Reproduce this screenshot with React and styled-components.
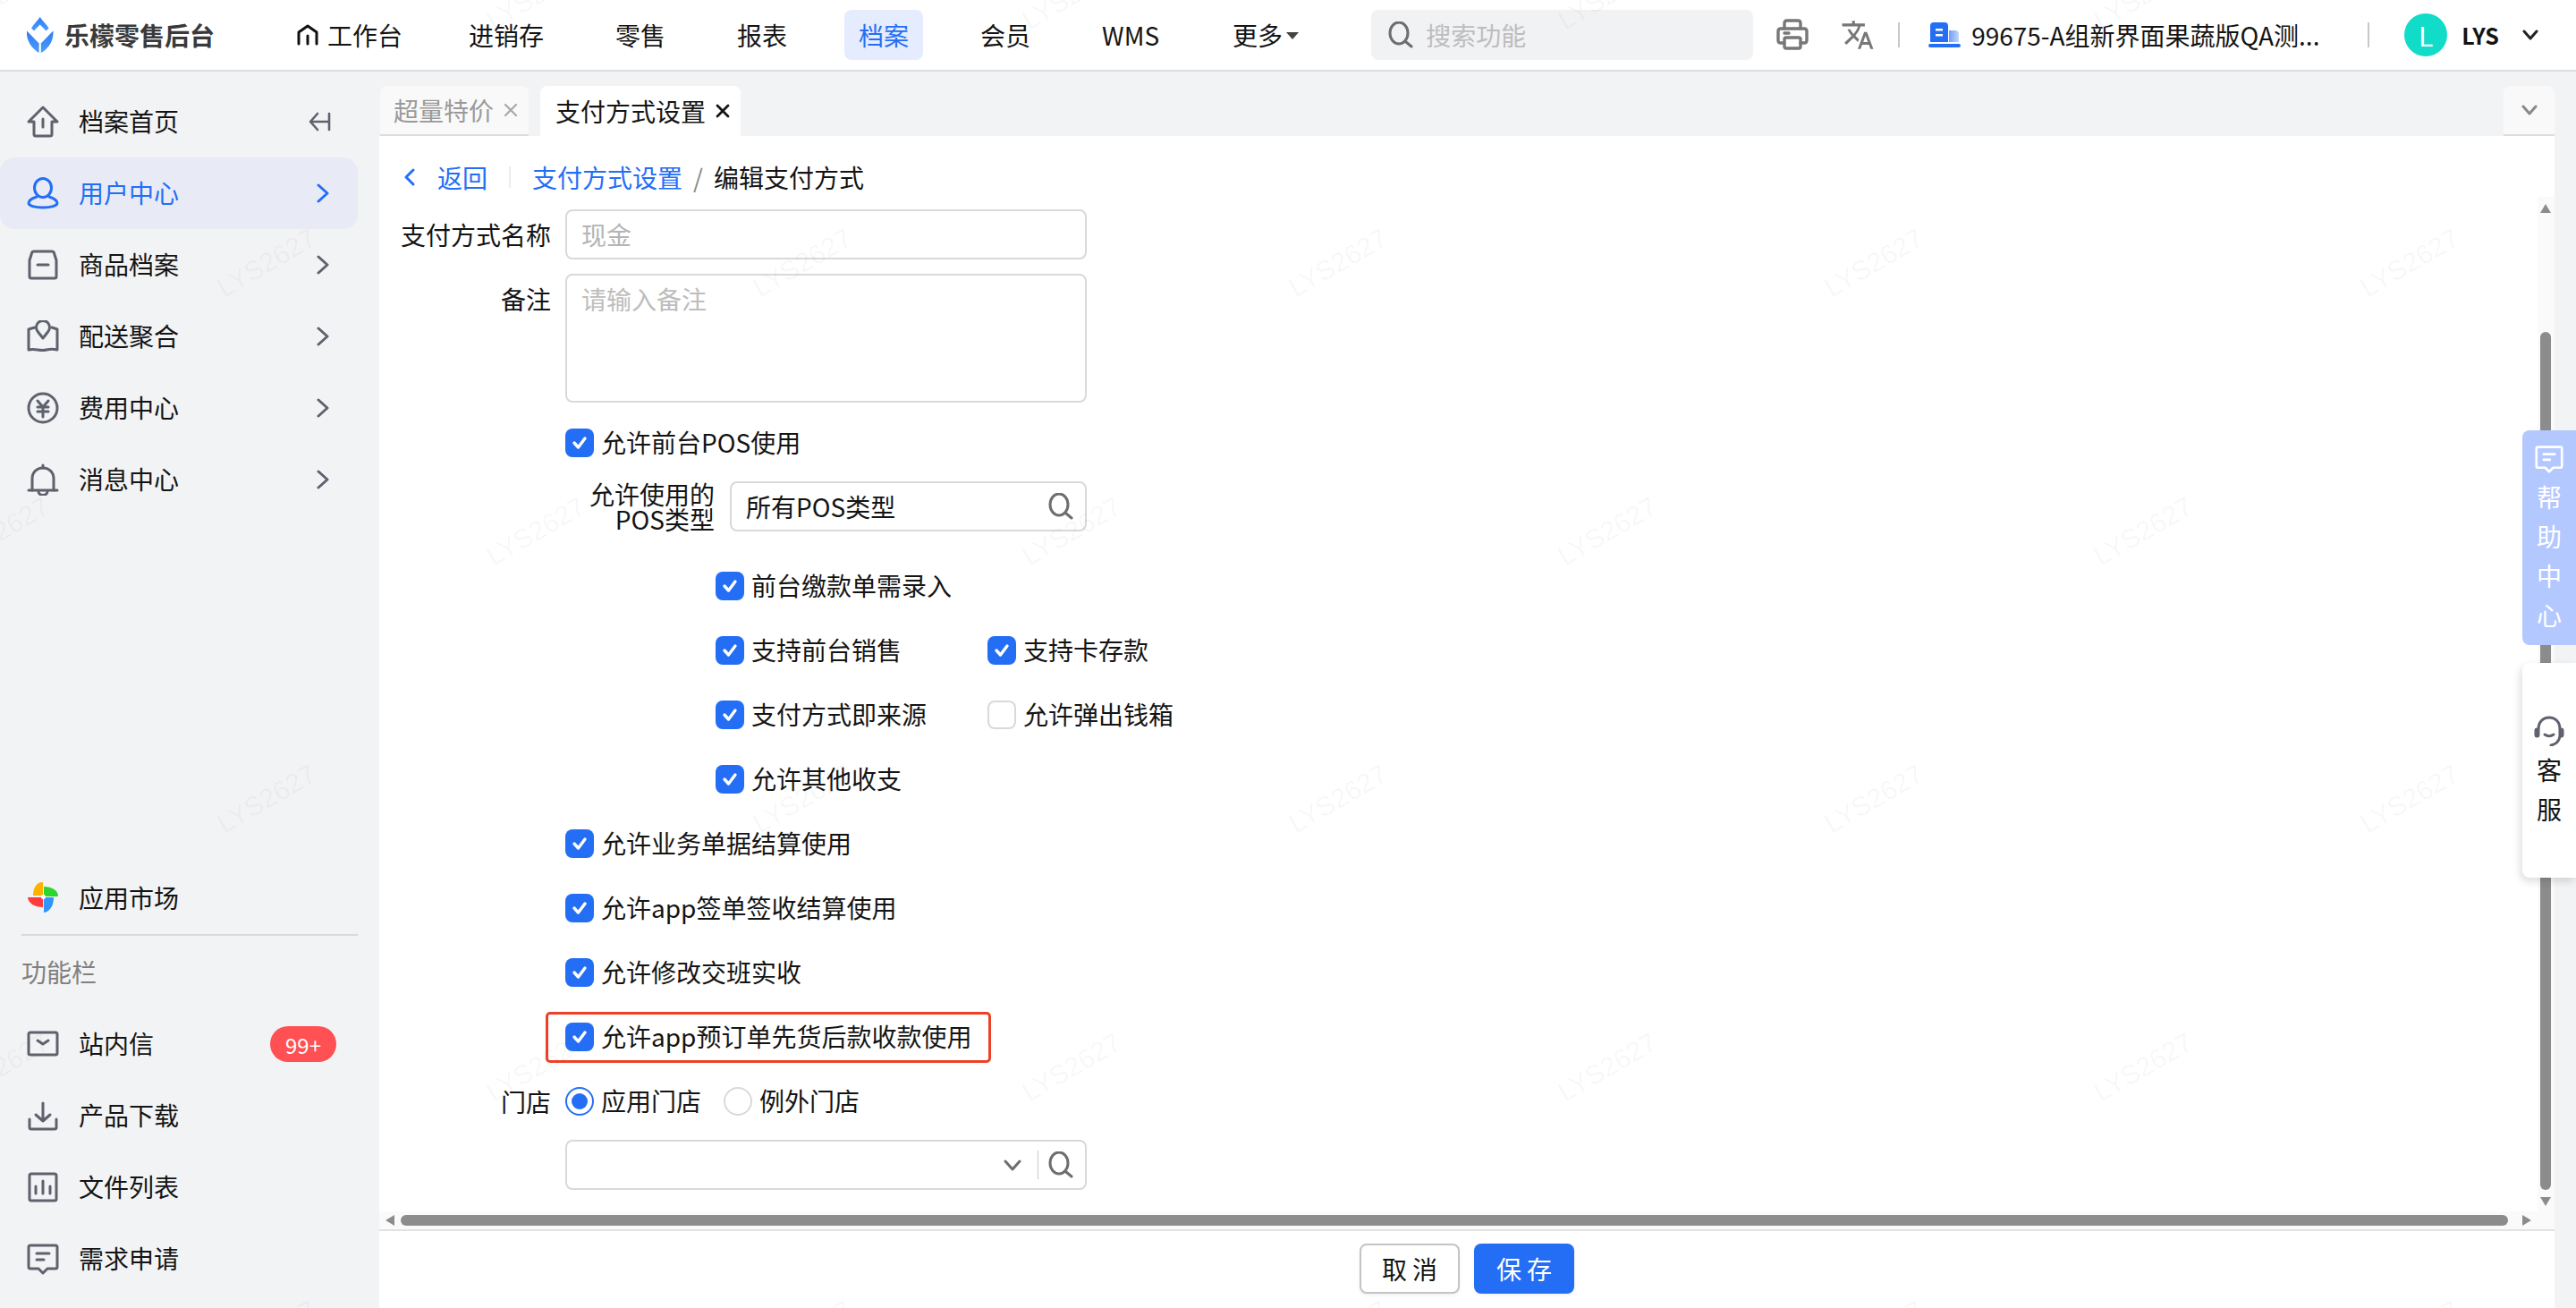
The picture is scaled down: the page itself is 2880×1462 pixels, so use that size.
import React from 'react'
import styled, { createGlobalStyle } from 'styled-components'
import { MdTranslate } from 'react-icons/md'

const blue = '#246ef5'
const iconGrey = '#5f616d'

const Global = createGlobalStyle`
  html, body {
    margin: 0;
    padding: 0;
    background: #f2f3f5;
  }
  body {
    font-family: "Noto Sans CJK SC", "Noto Sans", sans-serif;
    font-size: 28px;
    color: #141414;
  }
  * { box-sizing: border-box; }
`

const Page = styled.div`
  position: relative;
  width: 2880px;
  height: 1462px;
  display: flex;
  flex-direction: column;
  overflow: hidden;
`

// the glyphs sit about 2px higher in the reference than the box centre
const Raised = styled.span`
  margin-bottom: 2px;
  white-space: nowrap;
`

/* header */
const Header = styled.header`
  height: 80px;
  flex: none;
  display: flex;
  align-items: center;
  padding-left: 30px;
  background: #fff;
  border-bottom: 2px solid #dcdcdc;
`
const Brand = styled.div`
  display: flex;
  align-items: center;
  gap: 12px;
  width: 285px;
  font-weight: 700;
  color: #3a3a3a;
  line-height: 40px;
`
const Nav = styled.nav`
  display: flex;
  align-items: center;
  gap: 48px;
`
const NavItem = styled.div`
  height: 56px;
  padding: 0 16px;
  margin-left: ${p => p.$shift || 0}px;
  display: flex;
  align-items: center;
  border-radius: 8px;
  background: ${p => (p.$active ? '#e4ecfd' : 'transparent')};
  color: ${p => (p.$active ? blue : '#141414')};
`
const HomeNavItem = styled(NavItem)`
  gap: 9px;
  margin-right: -6px;
`
const Caret = styled.i`
  width: 0;
  height: 0;
  margin-left: 4px;
  margin-top: 2px;
  border-left: 7px solid transparent;
  border-right: 7px solid transparent;
  border-top: 8px solid #444;
`
const SearchBox = styled.div`
  width: 427px;
  height: 56px;
  margin-left: 65px;
  padding-left: 18px;
  display: flex;
  align-items: center;
  gap: 13px;
  border-radius: 8px;
  background: #f1f2f4;
  color: #bdbdbd;
`
const HeaderTools = styled.div`
  display: flex;
  align-items: center;
  margin-left: 26px;
`
const ToolIcon = styled.span`
  display: flex;
  color: #777;
  margin-left: ${p => p.$before || 0}px;
  margin-right: ${p => p.$after || 0}px;
`
const VLine = styled.i`
  width: 2px;
  height: 28px;
  background: #c8c8c8;
`
const StoreName = styled.div`
  width: 392px;
  margin-left: 12px;
  white-space: nowrap;
`
const Avatar = styled.div`
  width: 48px;
  height: 48px;
  margin-left: 39px;
  border-radius: 50%;
  background: #10dcc8;
  color: #fff;
  display: flex;
  align-items: center;
  justify-content: center;
  font-size: 30px;
`
const UserName = styled.div`
  margin-left: 16px;
  font-weight: 600;
  font-size: 25px;
`

/* body */
const Body = styled.div`
  flex: 1;
  min-height: 0;
  display: flex;
  background: #f2f3f5;
`
const Sidebar = styled.aside`
  width: 424px;
  flex: none;
  padding-top: 16px;
  padding-bottom: 15px;
  display: flex;
  flex-direction: column;
`
const Menu = styled.div`
  display: flex;
  flex-direction: column;
  margin-top: ${p => (p.$bottom ? 'auto' : '0')};
`
const MenuItem = styled.div`
  width: 400px;
  height: 80px;
  flex: none;
  padding: 0 32px 0 30px;
  display: flex;
  align-items: center;
  gap: 22px;
  border-radius: 16px;
  background: ${p => (p.$active ? '#e8ebf5' : 'transparent')};
  color: ${p => (p.$active ? blue : '#141414')};
`
const MenuEnd = styled.span`
  margin-left: auto;
  margin-right: ${p => p.$shift || 0}px;
  display: flex;
`
const MenuLine = styled.div`
  width: 376px;
  height: 2px;
  margin-left: 24px;
  background: #d8d9dc;
`
const MenuTitle = styled.div`
  height: 81px;
  padding: 0 0 2px 24px;
  display: flex;
  align-items: center;
  color: #808080;
`
const Badge = styled.span`
  width: 74px;
  height: 40px;
  margin-left: auto;
  margin-right: -8px;
  border-radius: 20px;
  background: #ff5053;
  color: #fff;
  font-size: 24px;
  display: flex;
  align-items: center;
  justify-content: center;
`

/* main */
const Main = styled.main`
  flex: 1;
  min-width: 0;
  padding-top: 16px;
  padding-right: 24px;
  display: flex;
  flex-direction: column;
`
const Tabs = styled.div`
  height: 56px;
  flex: none;
  display: flex;
  gap: 13px;
  padding-left: 1px;
`
const Tab = styled.div`
  width: ${p => (p.$active ? 224 : 166)}px;
  padding-left: ${p => (p.$active ? 17 : 15)}px;
  display: flex;
  align-items: center;
  gap: 10px;
  border-radius: 8px 8px 0 0;
  background: ${p => (p.$active ? '#fff' : '#f9f9f9')};
  border-bottom: ${p => (p.$active ? 'none' : '2px solid #dcdcdc')};
  color: ${p => (p.$active ? '#141414' : '#9a9a9a')};
`
const TabMore = styled.div`
  width: 57px;
  margin-left: auto;
  display: flex;
  align-items: center;
  justify-content: center;
  border-radius: 8px 8px 0 0;
  background: #f9f9f9;
  border-bottom: 2px solid #dcdcdc;
`
const Panel = styled.section`
  flex: 1;
  min-height: 0;
  background: #fff;
  display: flex;
  flex-direction: column;
`
const ContentRow = styled.div`
  flex: 1;
  min-height: 0;
  display: flex;
`
const FormArea = styled.div`
  flex: 1;
  min-width: 0;
  padding-top: 10px;
`
const Crumbs = styled.div`
  height: 72px;
  padding-left: 28px;
  display: flex;
  align-items: center;
  color: ${blue};
`
const BackLink = styled.span`
  display: flex;
  align-items: center;
  gap: 25px;
`
const CrumbLine = styled.i`
  width: 2px;
  height: 24px;
  margin: 0 24px;
  background: #ececec;
`
const CrumbSep = styled.span`
  margin: 0 12px;
  color: #8a8a8a;
`
const CrumbNow = styled.span`
  color: #141414;
`
const FieldRow = styled.div`
  display: flex;
  align-items: ${p => (p.$top ? 'flex-start' : 'center')};
  margin-bottom: ${p => p.$after || 0}px;
`
const FieldLabel = styled.label`
  width: 192px;
  margin-right: 16px;
  flex: none;
  text-align: right;
  line-height: ${p => (p.$top ? '56px' : '36px')};
`
const TextInput = styled.input`
  width: 583px;
  height: 56px;
  padding: 0 16px;
  border: 2px solid #d9d9d9;
  border-radius: 8px;
  background: #fff;
  font: inherit;
  outline: none;
  &::placeholder { color: #b4b4b4; opacity: 1; }
`
const TextArea = styled.textarea`
  width: 583px;
  height: 144px;
  padding: 6px 16px;
  border: 2px solid #d9d9d9;
  border-radius: 8px;
  background: #fff;
  font: inherit;
  line-height: 40px;
  outline: none;
  resize: none;
  &::placeholder { color: #bdbdbd; opacity: 1; }
`
const Indented = styled.div`
  margin-left: ${p => p.$left}px;
  margin-top: ${p => p.$top || 0}px;
  display: ${p => (p.$flex ? 'flex' : 'block')};
  align-items: center;
`
const CheckRow = styled.div`
  height: 72px;
  display: grid;
  grid-template-columns: 304px auto;
  justify-content: start;
  align-items: center;
`
const CheckItem = styled.div`
  display: flex;
  align-items: center;
  gap: 8px;
`
const Box = styled.span`
  width: 32px;
  height: 32px;
  flex: none;
  display: flex;
  align-items: center;
  justify-content: center;
  border-radius: 8px;
  background: ${p => (p.$on ? blue : '#fff')};
  border: ${p => (p.$on ? 'none' : '2px solid #d9d9d9')};
`
const HighlightBox = styled.div`
  width: 498px;
  height: 57px;
  margin-left: -22px;
  padding-left: 19px;
  display: flex;
  align-items: center;
  border: 3px solid #ee4027;
  border-radius: 5px;
`
const RowPlain = styled.div`
  height: 72px;
  display: flex;
  align-items: center;
`
const SubLabel = styled.div`
  width: 167px;
  margin-right: 17px;
  flex: none;
  text-align: right;
  line-height: 28px;
`
const PickerBox = styled.div`
  width: ${p => p.$w}px;
  height: 56px;
  padding-left: 16px;
  padding-right: 12px;
  display: flex;
  align-items: center;
  justify-content: space-between;
  border: 2px solid #d9d9d9;
  border-radius: 8px;
  background: #fff;
`
const PickerTools = styled.div`
  display: flex;
  align-items: center;
  gap: 10px;
`
const PickerArrow = styled.span`
  display: flex;
  margin-right: 8px;
`
const PickerLine = styled.i`
  width: 1px;
  height: 32px;
  background: #c8c8c8;
`
const RadioGroup = styled.div`
  display: flex;
  align-items: center;
`
const RadioItem = styled.div`
  display: flex;
  align-items: center;
  gap: 8px;
  margin-right: 25px;
`
const RadioDot = styled.span`
  width: 32px;
  height: 32px;
  flex: none;
  border-radius: 50%;
  display: flex;
  align-items: center;
  justify-content: center;
  border: 2px solid ${p => (p.$on ? blue : '#d9d9d9')};
  &::after {
    content: '';
    width: 18px;
    height: 18px;
    border-radius: 50%;
    background: ${p => (p.$on ? blue : 'transparent')};
  }
`

/* scroll bars */
const VBar = styled.div`
  width: 19px;
  flex: none;
  margin-top: 68px;
  padding: 8px 4px 6px 3px;
  background: #fafafa;
  display: flex;
  flex-direction: column;
  align-items: center;
`
const VThumb = styled.div`
  width: 12px;
  height: 959px;
  margin-top: 133px;
  margin-bottom: auto;
  border-radius: 6px;
  background: #8c8c8c;
`
const ArrowV = styled.i`
  width: 0;
  height: 0;
  border-left: 6px solid transparent;
  border-right: 6px solid transparent;
  ${p => (p.$down ? 'border-top: 10px solid #8c8c8c;' : 'border-bottom: 10px solid #8c8c8c;')}
`
const HBar = styled.div`
  height: 22px;
  flex: none;
  padding-left: 7px;
  display: flex;
  align-items: center;
  background: #fafafa;
  border-bottom: 2px solid #e2e2e2;
`
const HThumb = styled.div`
  width: 2356px;
  height: 12px;
  margin: 0 16px 0 7px;
  border-radius: 6px;
  background: #8c8c8c;
`
const ArrowH = styled.i`
  width: 0;
  height: 0;
  border-top: 6px solid transparent;
  border-bottom: 6px solid transparent;
  ${p => (p.$right ? 'border-left: 10px solid #8c8c8c;' : 'border-right: 10px solid #8c8c8c;')}
`

/* footer */
const Footer = styled.footer`
  height: 86px;
  flex: none;
  padding-top: 14px;
  display: flex;
  justify-content: center;
  gap: 16px;
`
const Button = styled.button`
  width: 112px;
  height: 56px;
  border-radius: 8px;
  font: inherit;
  letter-spacing: 6px;
  padding: 0 0 0 6px;
  border: ${p => (p.$primary ? 'none' : '2px solid #c4c4c4')};
  background: ${p => (p.$primary ? blue : '#fff')};
  color: ${p => (p.$primary ? '#fff' : '#141414')};
  box-shadow: 0 2px 4px rgba(0, 0, 0, 0.06);
`

/* floating side tabs */
const SideDock = styled.div`
  position: absolute;
  right: 0;
  top: 481px;
  display: flex;
  flex-direction: column;
  gap: 20px;
`
const SideTab = styled.div`
  width: 60px;
  height: 240px;
  padding-top: 4px;
  display: flex;
  flex-direction: column;
  align-items: center;
  justify-content: center;
  line-height: 44px;
  border-radius: 8px 0 0 8px;
  background: ${p => (p.$help ? '#b3c8ff' : '#fff')};
  color: ${p => (p.$help ? '#fff' : '#141414')};
  box-shadow: ${p => (p.$help ? 'none' : '-2px 4px 10px rgba(0, 0, 0, 0.14)')};
`
const SideIcon = styled.span`
  display: flex;
  margin-bottom: 4px;
`

/* watermark */
const WatermarkLayer = styled.div`
  position: absolute;
  inset: 0;
  overflow: hidden;
  pointer-events: none;
`
const Mark = styled.span`
  position: absolute;
  width: 170px;
  margin-left: -85px;
  margin-top: -20px;
  text-align: center;
  font-family: "Liberation Sans", sans-serif;
  font-size: 30px;
  line-height: 40px;
  color: rgba(0, 0, 0, 0.04);
  transform: rotate(-30deg);
`

/* icons */
const Svg = styled.svg`
  flex: none;
  display: block;
  fill: none;
  stroke: ${p => p.$c || iconGrey};
  stroke-width: ${p => p.$sw || 3};
  stroke-linecap: round;
  stroke-linejoin: round;
`
const Line = ({ w = 36, h = 36, c, sw, children }) => (
  <Svg width={w} height={h} viewBox={`0 0 ${w} ${h}`} $c={c} $sw={sw}>{children}</Svg>
)

const Logo = () => (
  <svg width="30" height="40" viewBox="0 0 30 40">
    <defs>
      <linearGradient id="lg" x1="0" y1="0" x2="0" y2="1">
        <stop offset="0" stopColor="#2b7cf5" />
        <stop offset="1" stopColor="#4f9cfb" />
      </linearGradient>
    </defs>
    <path fill="url(#lg)" d="M14.7 0 C17 4 22 8 24.6 12.4 L21.5 15.6 L14.7 8.6 L8 15.6 L5 12.4 C7.5 8 12.4 4 14.7 0Z" />
    <path fill="url(#lg)" d="M0 15.5 L13.6 29.4 V40 C6 36 -1 27 0 15.5Z" />
    <path fill="url(#lg)" d="M29.4 15.5 L15.8 29.4 V40 C23.4 36 30.4 27 29.4 15.5Z" />
  </svg>
)
const WorkIcon = () => (
  <Line w={26} h={24} c="#111"><path d="M3 22 V9 L13 2 L23 9 V22" /><path d="M13 13 V22" /></Line>
)
const HomeIcon = () => (
  <Line><path d="M2 18 L18 2 L34 18 H28 V32 Q28 34 26 34 H10 Q8 34 8 32 V18 Z" /><path d="M18 15 V24" /></Line>
)
const UserIcon = () => (
  <Line c={blue}>
    <ellipse cx="18" cy="12" rx="9.5" ry="10.5" />
    <path d="M11 22 C5 24 2 26 2 29 C2 32 9 34 18 34 C27 34 34 32 34 29 C34 26 31 24 25 22" />
  </Line>
)
const BoxIcon = () => (
  <Line>
    <path d="M8 3 H28 Q30 3 30.5 5 L33 13 V31 Q33 33 31 33 H5 Q3 33 3 31 V13 L5.5 5 Q6 3 8 3 Z" /><path d="M12 18 H24" />
  </Line>
)
const MapIcon = () => (
  <Line>
    <path d="M9 8 L2 10 V33 C10 31 14 35 22 33 C26 32 30 32 34 33 V10 L28 8" />
    <path d="M18 20 L12.5 13 A7.5 7.5 0 1 1 23.5 13 Z" />
  </Line>
)
const YenIcon = () => (
  <Line>
    <circle cx="18" cy="18" r="16" />
    <path d="M12 10 L18 17 L24 10 M12 17 H24 M12 22 H24 M18 17 V28" />
  </Line>
)
const BellIcon = () => (
  <Line>
    <path d="M6 30 V17 C6 10 11 5 18 5 C25 5 30 10 30 17 V30" /><path d="M2 30 H34" /><path d="M18 2 V5" />
    <path d="M13 31 C13 37 23 37 23 31" />
  </Line>
)
const MailIcon = () => (
  <Line>
    <rect x="2" y="5" width="32" height="25" rx="2" /><path d="M12 14 L18 18 L24 14" />
  </Line>
)
const DownloadIcon = () => (
  <Line>
    <path d="M3 22 V31 Q3 33 5 33 H31 Q33 33 33 31 V22" /><path d="M18 4 V24 M10 17 L18 24 L26 17" />
  </Line>
)
const ChartIcon = () => (
  <Line>
    <rect x="3" y="3" width="30" height="30" rx="2" /><path d="M10 17 V25 M18 11 V25 M26 17 V25" />
  </Line>
)
const BubbleIcon = ({ c, w = 36 }) => (
  <Svg width={w} height={w} viewBox="0 0 36 36" $c={c}>
    <path d="M4 3 H32 Q34 3 34 5 V27 Q34 29 32 29 H23 L18 34 L13 29 H4 Q2 29 2 27 V5 Q2 3 4 3 Z" />
    <path d="M11 12 H25 M11 19 H19" />
  </Svg>
)
const Pinwheel = () => (
  <svg width="36" height="36" viewBox="-1 0 36 36">
    <path fill="#ffb000" d="M17 15 V0 C10 0 6 6 6 15 Z" />
    <path fill="#2fd52f" d="M18 16 H34 C34 9 27 5 18 5 Z" />
    <path fill="#ff3b3b" d="M17 17 H0 C1 24 8 28 17 28 Z" />
    <path fill="#2f95ff" d="M18 17 V34 C25 33 29 26 29 17 Z" />
    <circle cx="17.5" cy="16.5" r="2.5" fill="#fff" />
  </svg>
)
const Collapse = () => (
  <Line w={26} h={24} sw={2.6}><path d="M11 3 L3 12 L11 21 M3 12 H24 M24 3 V21" /></Line>
)
const Chevron = ({ c = iconGrey, dir = 'right', w = 14, h = 22 }) => (
  <Line w={w} h={h} c={c}>
    {dir === 'right'
      ? <path d={`M2 2 L${w - 2} ${h / 2} L2 ${h - 2}`} />
      : dir === 'left'
        ? <path d={`M${w - 2} 2 L2 ${h / 2} L${w - 2} ${h - 2}`} />
        : <path d={`M2 2 L${w / 2} ${h - 2} L${w - 2} 2`} />}
  </Line>
)
const CloseMark = ({ c, sw }) => (
  <Line w={18} h={18} c={c} sw={sw}><path d="M3 3 L15 15 M15 3 L3 15" /></Line>
)
const SearchIcon = ({ c = '#6e6e6e', s = 30 }) => (
  <Line w={s} h={s} c={c}>
    <ellipse cx={s / 2 - 2} cy={s / 2 - 2} rx={s / 2 - 5} ry={s / 2 - 3} /><path d={`M${s - 9} ${s - 7} L${s - 3} ${s - 2}`} />
  </Line>
)
const PrinterIcon = () => (
  <Line c="#777" sw={3.4}>
    <path d="M9 11 V5 Q9 2 12 2 H24 Q27 2 27 5 V11" />
    <path d="M9 27 H5 Q2 27 2 24 V14 Q2 11 5 11 H31 Q34 11 34 14 V24 Q34 27 31 27 H27" />
    <rect x="9" y="21" width="18" height="12" rx="2" />
    <path d="M9 16 H14" />
  </Line>
)
const BuildingIcon = () => (
  <svg width="36" height="28" viewBox="0 0 36 28">
    <defs>
      <linearGradient id="bd" x1="0" y1="0" x2="1" y2="0">
        <stop offset="0" stopColor="#6f9ff8" />
        <stop offset="1" stopColor="#c3d6fc" />
      </linearGradient>
    </defs>
    <path fill={blue} d="M2 22 V4 Q2 0 6 0 H18 Q22 0 22 4 V22 Z" />
    <path fill="url(#bd)" d="M23 9 H30 Q34 9 34 13 V22 H23 Z" />
    <rect x="8" y="7" width="8" height="2.5" fill="#fff" />
    <rect x="8" y="13" width="8" height="2.5" fill="#fff" />
    <rect x="0" y="24" width="36" height="4" rx="2" fill={blue} />
  </svg>
)
const HeadsetIcon = () => (
  <Line w={34} h={34}>
    <path d="M5 15 C5 7 10 2 17 2 C24 2 29 7 29 15" />
    <rect x="2" y="15" width="3" height="8" rx="1.5" />
    <rect x="29" y="15" width="3" height="8" rx="1.5" />
    <path d="M29 23 C28 29 24 32 19 33" />
    <path d="M12 21 C15 23 19 23 22 21" />
  </Line>
)
const CheckMark = () => (
  <Line w={20} h={20} c="#fff" sw={3.4}><path d="M4 10 L8.5 15 L16 5" /></Line>
)

const Check = ({ on = true, children }) => (
  <CheckItem>
    <Box $on={on}>{on && <CheckMark />}</Box>
    <Raised>{children}</Raised>
  </CheckItem>
)

const topMenu = [
  { label: '用户中心', icon: <UserIcon />, active: true },
  { label: '商品档案', icon: <BoxIcon /> },
  { label: '配送聚合', icon: <MapIcon /> },
  { label: '费用中心', icon: <YenIcon /> },
  { label: '消息中心', icon: <BellIcon /> },
]

const marks = []
for (let row = -1; row < 6; row++) {
  const odd = row % 2 !== 0
  for (let col = -1; col < 6; col++) {
    marks.push({ x: 298 + col * 599 + (odd ? 301 : 0), y: 294 + row * 299.5 })
  }
}

export default function App() {
  return (
    <Page>
      <Global />
      <Header>
        <Brand><Logo />乐檬零售后台</Brand>
        <Nav>
          <HomeNavItem><WorkIcon />工作台</HomeNavItem>
          <NavItem>进销存</NavItem>
          <NavItem>零售</NavItem>
          <NavItem>报表</NavItem>
          <NavItem $active>档案</NavItem>
          <NavItem>会员</NavItem>
          <NavItem>WMS</NavItem>
          <NavItem $shift={2}>更多<Caret /></NavItem>
        </Nav>
        <SearchBox><SearchIcon />搜索功能</SearchBox>
        <HeaderTools>
          <ToolIcon $after={36}><PrinterIcon /></ToolIcon>
          <ToolIcon $after={26}><MdTranslate size={38} /></ToolIcon>
          <VLine />
          <ToolIcon $before={32}><BuildingIcon /></ToolIcon>
          <StoreName>99675-A组新界面果蔬版QA测...</StoreName>
          <ToolIcon $before={51}><VLine /></ToolIcon>
          <Avatar>L</Avatar>
          <UserName>LYS</UserName>
          <ToolIcon $before={26}><Chevron c="#222" dir="down" w={18} h={12} /></ToolIcon>
        </HeaderTools>
      </Header>
      <Body>
        <Sidebar>
          <Menu>
            <MenuItem><HomeIcon /><Raised>档案首页</Raised><MenuEnd $shift={-2}><Collapse /></MenuEnd></MenuItem>
            {topMenu.map(m => (
              <MenuItem key={m.label} $active={m.active}>
                {m.icon}<Raised>{m.label}</Raised>
                <MenuEnd><Chevron c={m.active ? blue : iconGrey} /></MenuEnd>
              </MenuItem>
            ))}
          </Menu>
          <Menu $bottom>
            <MenuItem><Pinwheel /><Raised>应用市场</Raised></MenuItem>
            <MenuLine />
            <MenuTitle>功能栏</MenuTitle>
            <MenuItem><MailIcon /><Raised>站内信</Raised><Badge>99+</Badge></MenuItem>
            <MenuItem><DownloadIcon /><Raised>产品下载</Raised></MenuItem>
            <MenuItem><ChartIcon /><Raised>文件列表</Raised></MenuItem>
            <MenuItem><BubbleIcon /><Raised>需求申请</Raised></MenuItem>
          </Menu>
        </Sidebar>
        <Main>
          <Tabs>
            <Tab>超量特价<CloseMark c="#a8a8a8" sw={2.2} /></Tab>
            <Tab $active>支付方式设置<CloseMark c="#141414" sw={2.8} /></Tab>
            <TabMore><Chevron c="#8a8a8a" dir="down" w={18} h={12} /></TabMore>
          </Tabs>
          <Panel>
            <ContentRow>
              <FormArea>
                <Crumbs>
                  <BackLink><Chevron c={blue} dir="left" w={12} h={20} />返回</BackLink>
                  <CrumbLine />
                  支付方式设置
                  <CrumbSep>/</CrumbSep>
                  <CrumbNow>编辑支付方式</CrumbNow>
                </Crumbs>
                <FieldRow $after={16}>
                  <FieldLabel>支付方式名称</FieldLabel>
                  <TextInput readOnly placeholder="现金" />
                </FieldRow>
                <FieldRow $top $after={9}>
                  <FieldLabel $top>备注</FieldLabel>
                  <TextArea readOnly placeholder="请输入备注" />
                </FieldRow>
                <Indented $left={208}>
                  <RowPlain><Check>允许前台POS使用</Check></RowPlain>
                </Indented>
                <Indented $left={208} $top={7} $flex>
                  <SubLabel>允许使用的POS类型</SubLabel>
                  <PickerBox $w={399}>所有POS类型<SearchIcon /></PickerBox>
                </Indented>
                <Indented $left={376} $top={25}>
                  <CheckRow><Check>前台缴款单需录入</Check></CheckRow>
                  <CheckRow><Check>支持前台销售</Check><Check>支持卡存款</Check></CheckRow>
                  <CheckRow><Check>支付方式即来源</Check><Check on={false}>允许弹出钱箱</Check></CheckRow>
                  <CheckRow><Check>允许其他收支</Check></CheckRow>
                </Indented>
                <Indented $left={208}>
                  <RowPlain><Check>允许业务单据结算使用</Check></RowPlain>
                  <RowPlain><Check>允许app签单签收结算使用</Check></RowPlain>
                  <RowPlain><Check>允许修改交班实收</Check></RowPlain>
                  <RowPlain>
                    <HighlightBox><Check>允许app预订单先货后款收款使用</Check></HighlightBox>
                  </RowPlain>
                </Indented>
                <FieldRow>
                  <FieldLabel>门店</FieldLabel>
                  <RowPlain>
                    <RadioGroup>
                      <RadioItem><RadioDot $on /><Raised>应用门店</Raised></RadioItem>
                      <RadioItem><RadioDot /><Raised>例外门店</Raised></RadioItem>
                    </RadioGroup>
                  </RowPlain>
                </FieldRow>
                <Indented $left={208} $top={7}>
                  <PickerBox $w={583}>
                    <span />
                    <PickerTools>
                      <PickerArrow><Chevron c="#6e6e6e" dir="down" w={20} h={13} /></PickerArrow>
                      <PickerLine />
                      <SearchIcon />
                    </PickerTools>
                  </PickerBox>
                </Indented>
              </FormArea>
              <VBar>
                <ArrowV />
                <VThumb />
                <ArrowV $down />
              </VBar>
            </ContentRow>
            <HBar>
              <ArrowH />
              <HThumb />
              <ArrowH $right />
            </HBar>
            <Footer>
              <Button>取消</Button>
              <Button $primary>保存</Button>
            </Footer>
          </Panel>
        </Main>
      </Body>
      <SideDock>
        <SideTab $help>
          <SideIcon><BubbleIcon c="#fff" w={32} /></SideIcon>
          <span>帮</span><span>助</span><span>中</span><span>心</span>
        </SideTab>
        <SideTab>
          <SideIcon><HeadsetIcon /></SideIcon>
          <span>客</span><span>服</span>
        </SideTab>
      </SideDock>
      <WatermarkLayer>
        {marks.map(m => (
          <Mark key={`${m.x}-${m.y}`} style={{ left: m.x, top: m.y }}>LYS2627</Mark>
        ))}
      </WatermarkLayer>
    </Page>
  )
}
